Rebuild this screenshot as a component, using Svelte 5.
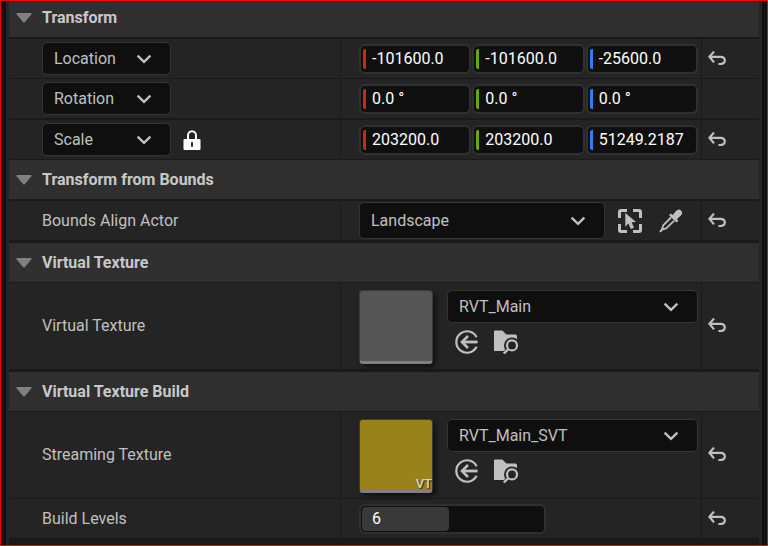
<script lang="ts">
	type Row = {
		kind: 'vector' | 'actor' | 'asset' | 'levels';
		label: string;
		values?: string[];
		asset?: string;
		virtual?: boolean;
		lock?: boolean;
		reset?: boolean;
		thick?: boolean;
	};

	const axes = ['x', 'y', 'z'];
	const maxLevels = 12;

	let levels = $state(6);

	const sections: { title: string; wide: boolean; rows: Row[] }[] = [
		{
			title: 'Transform',
			wide: false,
			rows: [
				{ kind: 'vector', label: 'Location', values: ['-101600.0', '-101600.0', '-25600.0'], reset: true, thick: true },
				{ kind: 'vector', label: 'Rotation', values: ['0.0 °', '0.0 °', '0.0 °'] },
				{ kind: 'vector', label: 'Scale', values: ['203200.0', '203200.0', '51249.2187'], lock: true, reset: true, thick: true },
			],
		},
		{
			title: 'Transform from Bounds',
			wide: true,
			rows: [{ kind: 'actor', label: 'Bounds Align Actor', asset: 'Landscape', reset: true, thick: true }],
		},
		{
			title: 'Virtual Texture',
			wide: true,
			rows: [{ kind: 'asset', label: 'Virtual Texture', asset: 'RVT_Main', reset: true }],
		},
		{
			title: 'Virtual Texture Build',
			wide: false,
			rows: [
				{ kind: 'asset', label: 'Streaming Texture', asset: 'RVT_Main_SVT', virtual: true, reset: true },
				{ kind: 'levels', label: 'Build Levels', reset: true },
			],
		},
	];
</script>

{#snippet dropdown(value: string, label: string, cls: string)}
	<div class="dropdown {cls}">
		<select aria-label={label}>
			<option>{value}</option>
		</select>
		<svg class="chevron" width="16" height="10" viewBox="0 0 16 10" aria-hidden="true">
			<path d="M1.6 1.6 L8 7.8 L14.4 1.6" />
		</svg>
	</div>
{/snippet}

<main class="panel">
	<div class="details">
		{#each sections as section}
			<section class:wide={section.wide}>
				<h2>
					<button class="header">
						<svg width="16" height="10" viewBox="0 0 16 10" aria-hidden="true">
							<path d="M1 0 H15 Q16 .4 15.4 1.3 L9 9 Q8 10 7 9 L.6 1.3 Q0 .4 1 0Z" fill="#808080" />
						</svg>
						<span>{section.title}</span>
					</button>
				</h2>

				{#each section.rows as row}
					<div class="row" class:thick={row.thick}>
						<div class="cell name">
							{#if row.kind === 'vector'}
								{@render dropdown(row.label, row.label + ' type', 'mode')}
								{#if row.lock}
									<button class="icon" aria-label="Lock scale ratio">
										<svg width="18" height="20" viewBox="0 0 18 20">
											<path d="M5 10 V5.5 a4 4.2 0 0 1 8 0 V10" fill="none" stroke="#fff" stroke-width="2" />
											<rect x="0.5" y="9" width="17" height="11" rx="1" fill="#fff" />
											<rect x="8" y="12" width="2" height="5" rx="1" fill="#242424" />
										</svg>
									</button>
								{/if}
							{:else if row.kind === 'levels'}
								<label for="levels">{row.label}</label>
							{:else}
								<span>{row.label}</span>
							{/if}
						</div>

						<div class="cell value">
							{#if row.kind === 'vector'}
								<div class="vector">
									{#each row.values ?? [] as value, i}
										<label class="number {axes[i]}">
											<input type="text" {value} aria-label="{row.label} {axes[i]}" />
										</label>
									{/each}
								</div>
							{:else if row.kind === 'actor'}
								{@render dropdown(row.asset ?? '', row.label, 'actor')}
								<button class="icon" aria-label="Select actor in viewport">
									<svg width="24" height="24" viewBox="0 0 24 24">
										<path class="line" stroke-width="3" d="M9 1.5 H3 Q1.5 1.5 1.5 3 V9 M15 1.5 H21 Q22.5 1.5 22.5 3 V9 M9 22.5 H3 Q1.5 22.5 1.5 21 V15 M15 22.5 H21 Q22.5 22.5 22.5 21 V15" />
										<path class="solid" d="M7.3 4 L18 13 L13.6 13.3 L16 18.7 L12.8 20 L10.4 14.6 L7.3 17.8Z" />
									</svg>
								</button>
								<button class="icon dropper" aria-label="Pick actor">
									<svg width="24" height="24" viewBox="0 0 24 24">
										<path class="line" stroke-width="1.8" stroke-linejoin="round" d="M12 8.5 L4.2 16.3 L3 20.6 L7.2 19.4 L15.2 11.6" />
										<path class="line" stroke-width="2" stroke-linecap="round" d="M3 20.6 L1.5 22.2" />
										<path class="solid" d="M10 6.2 L11.8 4.4 L13.7 6 L17 2 Q19.5 -.8 22 1.6 Q24.4 4.2 21.6 6.8 L17.8 10.2 L19.4 11.8 L17.6 13.6Z" />
									</svg>
								</button>
							{:else if row.kind === 'asset'}
								<button class="thumb" class:virtual={row.virtual} aria-label="{row.asset} thumbnail">
									{#if row.virtual}<span>VT</span>{/if}
								</button>
								<div class="asset">
									{@render dropdown(row.asset ?? '', row.label, 'pick')}
									<div class="tools">
										<button class="icon" aria-label="Use selected asset">
											<svg width="24" height="24" viewBox="0 0 24 24">
												<path class="line" stroke-width="2.2" d="M21.6 7.2 A10.7 10.7 0 1 0 21.6 16.8" />
												<path class="line" stroke-width="2.8" d="M22.6 12 H7" />
												<path class="line" stroke-width="2.6" d="M13 6 L7 12 L13 18" />
											</svg>
										</button>
										<button class="icon" aria-label="Browse to asset">
											<svg width="25" height="24" viewBox="0 0 25 24">
												<path class="solid" d="M0 1.6 Q0 .4 1.2 .4 H8.4 L12.4 4.6 H21.6 Q23 4.6 23 6.2 V21 H0Z" />
												<circle cx="18" cy="15.4" r="8" fill="#242424" />
												<path d="M14 17 L7.4 23.6 H24 V15Z" fill="#242424" />
												<circle class="line" cx="18" cy="15.4" r="5" stroke-width="2.2" />
												<path class="line" stroke-width="2.4" d="M14.4 19 L9.8 23.6" />
											</svg>
										</button>
									</div>
								</div>
							{:else}
								<div class="slider">
									<div class="track">
										<div class="fill" style="width: {(levels / maxLevels) * 96}%"></div>
									</div>
									<output for="levels">{levels}</output>
									<input id="levels" type="range" min="0" max={maxLevels} bind:value={levels} />
								</div>
							{/if}
						</div>

						<div class="cell reset">
							{#if row.reset}
								<button class="icon" aria-label="Reset {row.label} to default">
									<svg width="18" height="14" viewBox="0 0 18 14">
										<path class="line" stroke-width="2.2" d="M6 .6 L1.4 5.8 L6 11.4 M1.4 5.8 H12.6 C18 5.8 18.4 13 12.6 13 H10.4" />
									</svg>
								</button>
							{/if}
						</div>
					</div>
				{/each}
			</section>
		{/each}
	</div>
</main>

<style>
	:global(body) {
		margin: 0;
		background: #1a1a1a;
	}

	.panel {
		box-sizing: border-box;
		min-height: 100vh;
		display: flex;
		padding: 0 5px;
		border: 1px solid #f00;
		background: #111;
		color: #c0c0c0;
		font-family: Roboto, "Liberation Sans", sans-serif;
		font-size: 16px;
		line-height: 20px;
	}

	.details {
		flex: 1;
		min-width: 0;
		background: #1a1a1a;
		border: solid #242424;
		border-width: 0 3px;
	}

	section { padding-bottom: 1px; }
	section.wide { padding-bottom: 3px; }
	section:last-child { padding-bottom: 0; }

	button, select, input {
		font: inherit;
		color: inherit;
		margin: 0;
		padding: 0;
		border: 0;
		background: none;
		appearance: none;
		outline: none;
	}
	button { cursor: pointer; }

	h2 {
		margin: 0;
		font-size: 16px;
		font-weight: 700;
	}
	.header {
		display: flex;
		align-items: center;
		gap: 10px;
		width: 100%;
		height: 39px;
		padding-left: 7px;
		background: #2f2f2f;
		color: #c8c8c8;
	}
	section:first-child .header {
		height: 36px;
		padding-bottom: 2px;
	}

	.row {
		display: grid;
		grid-template-columns: 83fr 90fr 58px;
		border-top: 1px solid #1a1a1a;
		background: #242424;
	}
	.row.thick { border-top-width: 2px; }

	.cell {
		display: flex;
		align-items: center;
		min-width: 0;
		min-height: 39px;
	}
	.name {
		gap: 12px;
		padding-left: 33px;
		border-right: 1px solid #1a1a1a;
	}
	.value { padding: 0 3px 0 18px; }
	.reset {
		padding: 0 0 2px 6px;
		min-height: 37px;
		border-left: 1px solid #1a1a1a;
	}

	.icon { display: flex; }
	.line {
		fill: none;
		stroke: #c0c0c0;
	}
	.solid { fill: #c0c0c0; }

	.dropdown {
		display: grid;
		align-items: center;
		box-sizing: border-box;
		height: 33px;
		border: 1px solid #353535;
		border-radius: 5px;
		background: #0f0f0f;
	}
	.dropdown select {
		grid-area: 1 / 1;
		width: 100%;
		height: 100%;
		padding: 0 40px 0 11px;
	}
	.chevron {
		grid-area: 1 / 1;
		justify-self: end;
		margin-right: 18px;
		pointer-events: none;
		fill: none;
		stroke: #c0c0c0;
		stroke-width: 2.4;
	}
	.mode { width: 129px; }
	.actor {
		flex: 1;
		height: 37px;
		margin-right: 13px;
	}
	.dropper { margin: 0 15px 0 17px; }

	.vector {
		flex: 1;
		display: grid;
		grid-template-columns: repeat(3, 1fr);
		gap: 1px;
	}
	.number {
		display: flex;
		align-items: center;
		box-sizing: border-box;
		height: 30px;
		padding-left: 2px;
		border: 2px solid #303030;
		border-radius: 6px;
		background: #0f0f0f;
		color: #fff;
	}
	.number::before {
		content: '';
		flex: none;
		width: 3px;
		height: 20px;
		border-radius: 2px 0 0 2px;
		background: var(--axis);
	}
	.number input {
		min-width: 0;
		width: 100%;
		padding-left: 6px;
	}
	.x { --axis: #cc2a00; }
	.y { --axis: #67a900; }
	.z { --axis: #2c80ec; }

	.thumb {
		display: flex;
		align-items: flex-end;
		justify-content: flex-end;
		flex: none;
		box-sizing: border-box;
		width: 74px;
		height: 74px;
		margin: 7px 14px 5px 0;
		border: 1px solid #3c3c3c;
		border-bottom: 3px solid #808080;
		border-radius: 4px;
		background: #555;
		box-shadow: 3px 3px 5px #111;
	}
	.thumb.virtual { background: #998219; }
	.thumb span {
		font-size: 13px;
		line-height: 13px;
		font-weight: 500;
		color: #d8d4c0;
		text-shadow: 1px 1px 1px #222;
	}

	.asset {
		flex: 1;
		min-width: 0;
		align-self: flex-start;
		padding-top: 7px;
	}
	.tools {
		display: flex;
		gap: 15px;
		padding: 7px 0 0 8px;
	}

	.slider {
		display: grid;
		align-items: center;
		box-sizing: border-box;
		width: 187px;
		height: 30px;
		border: 2px solid #303030;
		border-radius: 6px;
		background: #0f0f0f;
		color: #fff;
	}
	.slider > * { grid-area: 1 / 1; }
	.track { height: 24px; padding-left: 1px; }
	.fill {
		height: 24px;
		border-radius: 4px;
		background: #393939;
	}
	output { padding-left: 11px; }
	.slider input {
		width: 100%;
		height: 100%;
		opacity: 0;
	}
</style>
